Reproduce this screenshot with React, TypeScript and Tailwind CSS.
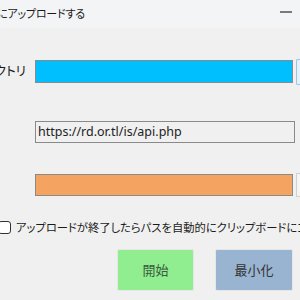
import React from 'react';

const jp = { fontFamily: '"Noto Sans CJK JP", "Noto Sans", sans-serif', fontFeatureSettings: '"palt"' };

const App = () => {
  return (
    <div className="w-[300px] h-[300px] overflow-hidden bg-[#f0f0f0] text-[#1a1a1a]" style={jp}>
      {/* title bar */}
      <div className="h-[28px] bg-[#f3f4f5] flex items-start justify-between">
        <span className="ml-[-3px] mt-[3px] text-[11px] leading-[20px] tracking-[-0.2px] whitespace-nowrap">にアップロードする</span>
        <div className="mt-[11px] mr-[8px] w-[12px] h-[2px] bg-[#7a7a7a]" />
      </div>

      {/* directory row */}
      <div className="mt-[32px] flex items-center h-[23px]">
        <div className="w-[31px] flex justify-end overflow-hidden whitespace-nowrap text-[12.5px] pr-[5px] shrink-0">
          <span>ディレクトリ</span>
        </div>
        <div className="ml-[4px] w-[260px] h-[23px] bg-[#00bfff] border border-[#8a8a8a]" />
        <div className="ml-[3px] w-[4px] h-[26px] border-l border-t border-b border-[#9ec3e6] bg-[#e5f1fb] rounded-l-[2px]" />
      </div>

      {/* url row */}
      <div className="mt-[38px] flex h-[22px]">
        <div className="ml-[35px] w-[260px] h-[22px] border border-[#8a8a8a] bg-[#f0f0f0] flex items-center px-[2px]">
          <span className="text-[12.5px] text-[#222]" style={{ fontFamily: '"Noto Sans", sans-serif' }}>
            https://rd.or.tl/is/api.php
          </span>
        </div>
      </div>

      {/* orange row */}
      <div className="mt-[31px] flex items-center h-[22px]">
        <div className="ml-[35px] w-[260px] h-[22px] bg-[#f4a460] border border-[#8a8a8a]" />
        <div className="ml-[3px] w-[4px] h-[24px] border-l border-t border-b border-[#d0d0d0] bg-[#f5f5f5]" />
      </div>

      {/* checkbox */}
      <div className="mt-[25px] flex items-center h-[13px]">
        <div className="ml-[-2px] w-[13px] h-[13px] border border-[#333] rounded-[3px] bg-white shrink-0" />
        <span className="ml-[5px] text-[11.3px] whitespace-nowrap">アップロードが終了したらパスを自動的にクリップボードにコピーする</span>
      </div>

      {/* buttons */}
      <div className="mt-[15px] flex h-[42px]">
        <div className="ml-[117px] w-[77px] h-[42px] bg-[#90ee90] border border-[#e6e6e6] rounded-[2px] flex items-center justify-center text-[13px] text-[#3b5a3b]">
          開始
        </div>
        <div className="ml-[21px] w-[78px] h-[42px] bg-[#99b4d1] border border-[#e6e6e6] rounded-[2px] flex items-center justify-center text-[13px] text-[#333]">
          最小化
        </div>
      </div>
    </div>
  );
};

export default App;
